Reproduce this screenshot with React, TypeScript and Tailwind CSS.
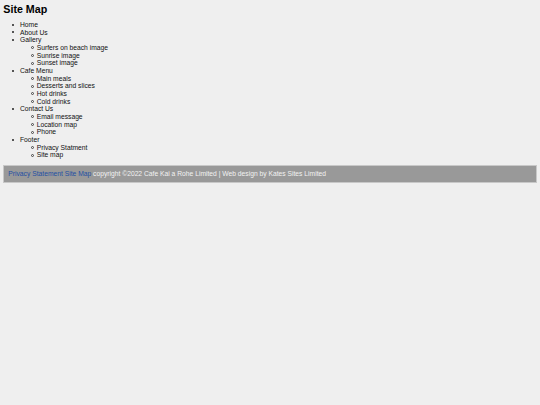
export default function App() {
  const sections: { title: string; items?: string[] }[] = [
    { title: "Home" },
    { title: "About Us" },
    { title: "Gallery", items: ["Surfers on beach image", "Sunrise image", "Sunset image"] },
    { title: "Cafe Menu", items: ["Main meals", "Desserts and slices", "Hot drinks", "Cold drinks"] },
    { title: "Contact Us", items: ["Email message", "Location map", "Phone"] },
    { title: "Footer", items: ["Privacy Statment", "Site map"] },
  ];
  return (
    <div
      className="min-h-[405px] bg-[#efefef] px-[3.3px] pt-[3px] text-[#111]"
      style={{ fontFamily: '"Liberation Sans", Arial, sans-serif' }}
    >
      <h2 className="text-[10.7px] font-bold leading-[12.3px] mb-[5.6px] text-black">Site Map</h2>
      <ul className="list-none pl-[16.7px] text-[6.73px] leading-[7.67px]">
        {sections.map((s) => (
          <li key={s.title}>
            <div className="flex items-center">
              <span className="ml-[-7.5px] mr-[5.5px] h-[2px] w-[2px] shrink-0 rounded-full bg-[#222]" />
              <span>{s.title}</span>
            </div>
            {s.items && (
              <ul className="list-none pl-[16.7px]">
                {s.items.map((i) => (
                  <li key={i} className="flex items-center">
                    <span className="ml-[-6px] mr-[3px] h-[3px] w-[3px] shrink-0 rounded-full border-[0.8px] border-[#444]" />
                    <span>{i}</span>
                  </li>
                ))}
              </ul>
            )}
          </li>
        ))}
      </ul>
      <div className="mt-[6.4px] border border-[#c8c8c8] bg-[#999999] px-[4px] py-[4px] text-[6.73px] leading-[7.67px] text-[#f2f2f2]">
        <a className="text-[#1f4fa3]">Privacy Statement</a> <a className="text-[#1f4fa3]">Site Map</a> copyright
        ©2022 Cafe Kai a Rohe Limited | Web design by Kates Sites Limited
      </div>
    </div>
  );
}
